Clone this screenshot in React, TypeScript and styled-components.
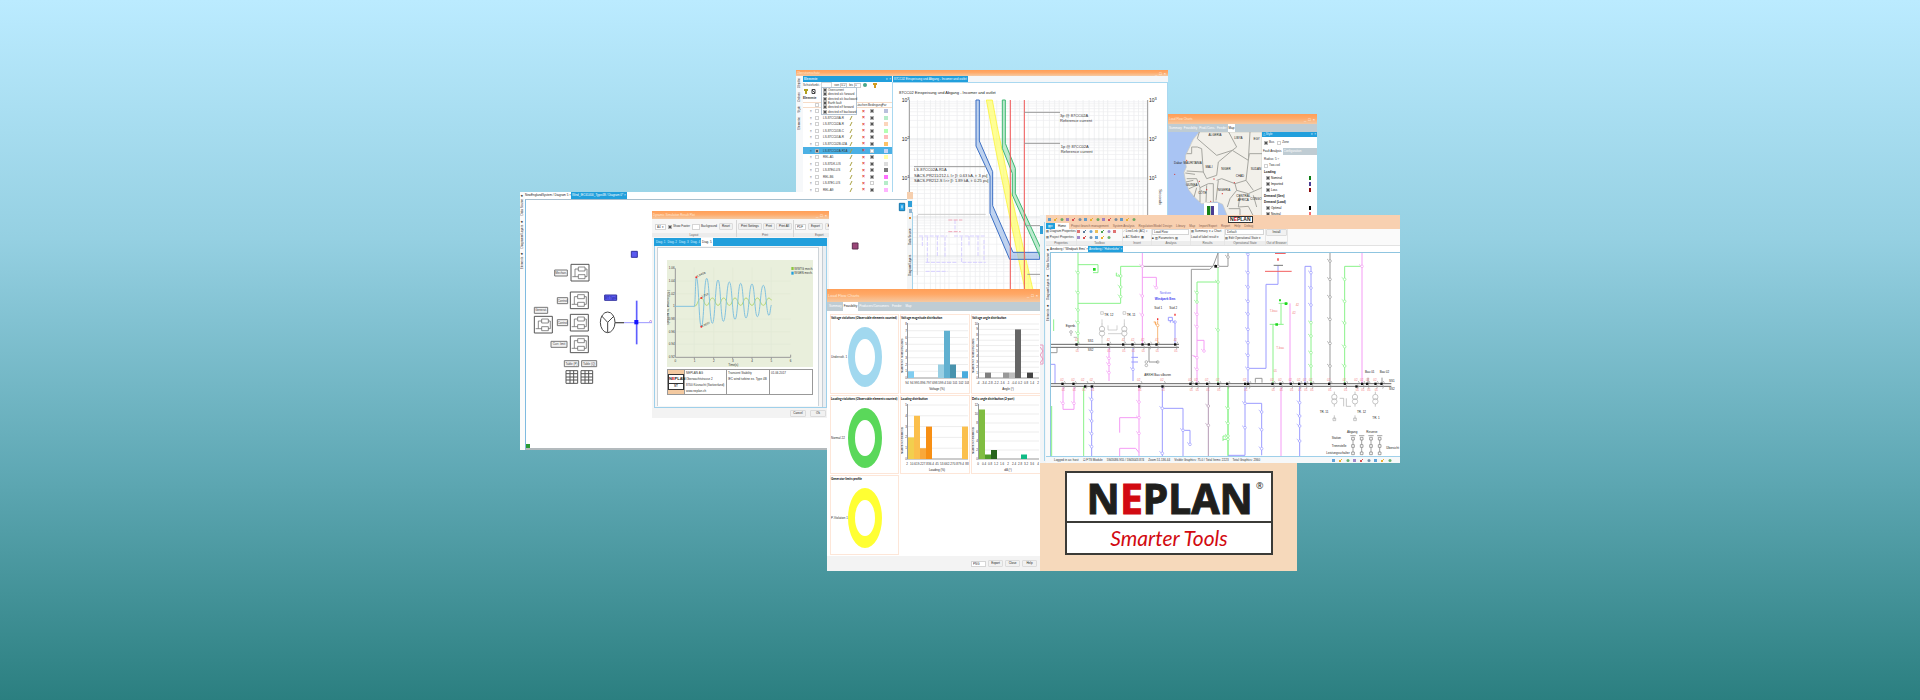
import React from "react";
import styled, { createGlobalStyle, css } from "styled-components";

const GlobalStyle = createGlobalStyle`
  *, *::before, *::after { box-sizing: border-box; }
  body { margin: 0; }
  button, input, select {
    font: inherit;
    color: inherit;
    margin: 0;
    padding: 0;
    border: 0;
    border-radius: 0;
    background: none;
    appearance: none;
  }
  svg { display: block; }
  table { border-collapse: collapse; }
`;

const FONT = `"Liberation Sans", Arial, sans-serif`;
const BLUE = "#219fdc";
const PEACH = "#f6d9bb";

/* ---------- desktop and windows ---------- */

const Page = styled.main`
  min-height: 100vh;
  padding: 70px 0 129px;
  overflow: hidden;
  background: linear-gradient(#bbebff, #95d0e2 34%, #60a9b5 67%, #2b7f80);
  font-family: ${FONT};
  font-size: 3px;
  line-height: 5px;
  color: #333;
`;

const Stage = styled.div`
  position: relative;
  width: 880px;
  height: 501px;
  margin: 0 auto;
`;

const Win = styled.section<{ $x: number; $y: number; $w: number; $h: number; $bg?: string }>`
  position: absolute;
  left: ${(p) => p.$x}px;
  top: ${(p) => p.$y}px;
  width: ${(p) => p.$w}px;
  height: ${(p) => p.$h}px;
  display: flex;
  flex-direction: column;
  overflow: hidden;
  white-space: nowrap;
  background: ${(p) => p.$bg ?? "#fff"};
`;

const TitleBar = styled.header<{ $h: number; $size?: number }>`
  flex: none;
  display: flex;
  align-items: center;
  justify-content: space-between;
  height: ${(p) => p.$h}px;
  padding: 0 2px 0 1px;
  background: linear-gradient(#ff9f58, #ffa866 40%, #f5c9a2);
  color: #ffe9d6;
  font-size: ${(p) => p.$size ?? 3}px;
`;

const WinButtons = styled.span`
  display: flex;
  gap: 2px;
  color: #fff;
  font-size: 4px;
`;

const Row = styled.div<{ $gap?: number; $pad?: string }>`
  display: flex;
  align-items: center;
  gap: ${(p) => p.$gap ?? 0}px;
  padding: ${(p) => p.$pad ?? "0"};
`;

const Body = styled.div`
  flex: 1;
  display: flex;
  min-height: 0;
`;

const Column = styled.div<{ $w?: number; $bg?: string }>`
  flex: ${(p) => (p.$w ? `0 0 ${p.$w}px` : "1")};
  min-width: 0;
  display: flex;
  flex-direction: column;
  background: ${(p) => p.$bg ?? "transparent"};
`;

const Tabs = styled.nav<{ $h: number; $bg?: string; $color?: string; $pad?: number }>`
  flex: none;
  display: flex;
  align-items: stretch;
  height: ${(p) => p.$h}px;
  padding: 0 ${(p) => p.$pad ?? 0}px;
  background: ${(p) => p.$bg ?? "#fff"};
  color: ${(p) => p.$color ?? "#222"};
`;

const Tab = styled.button<{ $active?: boolean; $blue?: boolean; $pad?: number }>`
  padding: 0 ${(p) => p.$pad ?? 2}px;
  line-height: 5px;
  ${(p) => p.$active && css`background: #fff; color: #222;`}
  ${(p) => p.$blue && css`background: ${BLUE}; color: #fff;`}
`;

const SideRail = styled.div<{ $w: number; $bg?: string }>`
  flex: 0 0 ${(p) => p.$w}px;
  display: flex;
  flex-direction: column;
  gap: 4px;
  padding-top: 2px;
  background: ${(p) => p.$bg ?? "#fafafa"};
  span {
    writing-mode: vertical-rl;
    transform: rotate(180deg);
    line-height: ${(p) => p.$w}px;
  }
`;

const Check = styled.input.attrs({ type: "checkbox" })`
  flex: none;
  display: block;
  width: 4px;
  height: 4px;
  border: 1px solid #d0d0d0;
  background: #fff;
  &:checked { background: #555; border-color: #b4b4b4; }
`;

const Label = styled.label`
  display: flex;
  align-items: center;
  gap: 1px;
`;

const Pick = styled.select<{ $w: number }>`
  width: ${(p) => p.$w}px;
  height: 6px;
  padding-left: 1px;
  border: 1px solid #d5d5d5;
  background: #fff;
  line-height: 4px;
`;

const Field = styled.input<{ $w: number }>`
  width: ${(p) => p.$w}px;
  height: 5px;
  border: 1px solid #ccc;
`;

const Push = styled.button<{ $w?: number }>`
  min-width: ${(p) => p.$w ?? 0}px;
  height: 7px;
  padding: 0 2px;
  border: 1px solid #dcdcdc;
  border-radius: 1px;
  background: #f1f1f1;
  line-height: 5px;
  color: #222;
`;

const Drawing = styled.svg`
  flex: none;
  font-family: ${FONT};
`;

const Controls = () => (
  <WinButtons aria-hidden="true"><span>_</span><span>□</span><span>×</span></WinButtons>
);

/* ---------- overcurrent protection window ---------- */

const ElementsTable = styled.table`
  width: 100%;
  height: 91px;
  table-layout: fixed;
  text-align: left;
  line-height: 4px;
  td, th { padding: 0; font-weight: normal; }
  th { border-bottom: 1px solid #f6dcc8; border-top: 1px solid #f6dcc8; }
  td:first-child { padding-left: 7px; }
  td:nth-child(5) { padding-left: 6px; }
  td:nth-child(6), td:nth-child(7) { padding-left: 2px; }
`;

const ElementRow = styled.tr<{ $selected?: boolean }>`
  background: ${(p) => (p.$selected ? "#4bb0e4" : "#fff")};
`;

const Swatch = styled.i<{ $c: string; $w?: number }>`
  display: block;
  flex: none;
  width: ${(p) => p.$w ?? 4}px;
  height: 4px;
  background: ${(p) => p.$c};
`;

const Cross = styled.b`
  color: #e03030;
  font-size: 5px;
`;

const BlueHeader = styled.div<{ $h: number }>`
  flex: none;
  display: flex;
  justify-content: space-between;
  align-items: center;
  height: ${(p) => p.$h}px;
  padding: 0 1px;
  background: ${BLUE};
  color: #e4f5ff;
`;

const Menu = styled.div`
  position: absolute;
  left: 25px;
  top: 17px;
  width: 36px;
  height: 28px;
  display: flex;
  flex-direction: column;
  justify-content: space-around;
  padding: 0 1px;
  border: 1px solid #b5c4d2;
  background: #fff;
  line-height: 4px;
`;

const elements: [string, string, boolean][] = [
  ["", "#b9c0dc", true],
  ["LS-87CC03A-R", "#b5ecc8", true],
  ["LS-87CC02A-R", "#fbd5bb", true],
  ["LS-87CC01B-C", "#b4ffb4", true],
  ["LS-87CC01A-R", "#ffbcbc", true],
  ["LS-87CC02B-02A", "#ffc266", true],
  ["LS-87CC02A-R1A", "#c7d4f5", false],
  ["REL-A5", "#ffffa8", true],
  ["LS-87DK-LIS", "#dddddd", true],
  ["LS-87E4-LIS", "#7b7b7b", true],
  ["REL-B6", "#ff70ff", true],
  ["LS-87E1-LIS", "#b5ecc8", false],
  ["REL-A9", "#ffb4ff", true],
];

const menuItems = ["Overcurrent", "directed o/c forward", "directed o/c backward", "Earth fault", "directed e/f forward", "directed e/f backward"];

const gridX: number[] = [];
for (let d = 391; d < 1106; d += 119) [1, 1.6, 2.4, 3.4, 4.6, 6, 7.8].forEach((v) => gridX.push(d + 119 * Math.log10(v)));
const gridY: number[] = [];
for (let d = 0; d < 5; d++) for (let v = 1; v < 10; v++) gridY.push(120 + 117 * (d + 1 - Math.log10(v)));

const ProtectionPlot = () => (
  <Drawing width={273} height={211} viewBox="342 69 819 633" role="img" aria-label="Time-current characteristics">
    <g stroke="#e9eaec" strokeWidth={2}>
      {gridX.filter((x) => x < 1106).map((x, i) => <path key={i} d={`M${x} 120V700`} />)}
      {gridY.map((y, i) => <path key={i} d={`M391 ${y}H1106`} stroke={i % 9 === 0 ? "#d2d4d8" : "#ededf0"} />)}
    </g>
    <path d="M391 120V700M1106 120V700" stroke="#999" strokeWidth={3} />
    <g fontSize={12} fill="#222">
      <text x={360} y={103}>87CC02 Einspeisung und Abgang - Incomer and outlet</text>
      {[["3", 125], ["2", 242], ["1", 359]].map(([e, y]) => (
        <g key={e} fontSize={15}>
          <text x={368} y={y}>10<tspan dy={-5} fontSize={12}>{e}</tspan></text>
          <text x={1110} y={y}>10<tspan dy={-5} fontSize={12}>{e}</tspan></text>
        </g>
      ))}
    </g>
    <path d="M417 463H620M415 465V645" stroke="#ccc" strokeWidth={3} fill="none" />
    <g stroke="#d6cfff" strokeWidth={3} strokeDasharray="12 4" fill="none">
      <path d="M420 528H505M525 528H620M440 607H535M550 607H620M440 634H505M430 530V560M445 530V607M475 528V590M498 530V590M548 530V607M570 528V560M597 528V590M615 540V600M528 480V515" />
      <path d="M508 480H550M508 515H545" stroke="#f0a8b8" />
    </g>
    <path d="M622 120L650 270 738 690H762L700 420 655 200 640 120Z" fill="#ffff5c" fillOpacity={0.65} stroke="#fbf21f" strokeWidth={2} />
    <path d="M591 120V258L633 348V460L692 598H782V577H702L641 437V335L601 243V120Z" fill="#9dbbe8" fillOpacity={0.65} stroke="#3c6fc4" strokeWidth={3} />
    <path d="M670 120V265L700 340V405L788 600V570L709 400V325L679 250V120Z" fill="#9be0b5" fillOpacity={0.65} stroke="#3fb873" strokeWidth={3} />
    <path d="M694 120V700M736 120V700" stroke="#f05a5a" strokeWidth={3} />
    <path d="M736 157H843M736 250H843M405 320H620M736 497H800M745 643H800" stroke="#999" strokeWidth={3} fill="none" />
    <g fontSize={12} fill="#333">
      <text x={843} y={171}>3p @ 87CC02A</text>
      <text x={843} y={187}>Reference current</text>
      <text x={845} y={264}>1p @ 87CC02A</text>
      <text x={845} y={280}>Reference current</text>
      <text x={405} y={334}>LS-87CC02A-R1A</text>
      <text x={405} y={350}>SACS-PR211/212-L I&gt; [I: 0.63 kA, t: 3 pu]</text>
      <text x={405} y={366}>SACS-PR212-S I&gt;&gt; [I: 1.89 kA, t: 0.25 pu]</text>
      <text transform="translate(1141 388) rotate(90)">Seconds</text>
    </g>
  </Drawing>
);

const PlotFrame = styled.div`
  flex: 1;
  border: 1px solid #a9d8f0;
  overflow: hidden;
`;

const OvercurrentWindow = () => (
  <Win $x={276} $y={0} $w={372} $h={222}>
    <TitleBar $h={6}><span>Überstromschutz</span><Controls /></TitleBar>
    <Body>
      <SideRail $w={7} $bg="#f6f8fa"><span>Objekte</span><span>Ordnen</span><span>Style</span><span>Elemente</span></SideRail>
      <Column $w={89}>
        <BlueHeader $h={6}><b>Elemente</b><span>▾ ×</span></BlueHeader>
        <Row $gap={2}>
          <Label>Schutzfunkt.:<Pick $w={11} aria-label="Schutzfunktionen" /></Label>
          <Label>von<Field $w={7} defaultValue="0.2" /></Label>
          <Label>bis<Field $w={7} defaultValue="5" /></Label>
          <svg width={14} height={5} viewBox="0 0 14 5"><circle cx={2} cy={2} r={2} fill="#4aa58a" /><path d="M10 1h4M12 1v4" stroke="#d39b20" strokeWidth={2} /></svg>
        </Row>
        <Row $pad="1px 0 0 1px">
          <svg width={12} height={5} viewBox="0 0 12 5"><path d="M0 1h4M2 1v4" stroke="#b0a020" strokeWidth={2} /><path d="M8 0.500h3v4h-3zM8 1l3 3" stroke="#444" fill="none" /></svg>
        </Row>
        <Row $pad="2px 0 1px"><b>Elemente</b></Row>
        <ElementsTable>
          <colgroup><col style={{ width: 12 }} /><col style={{ width: 8 }} /><col style={{ width: 25 }} /><col style={{ width: 8 }} /><col style={{ width: 12 }} /><col style={{ width: 14 }} /><col /></colgroup>
          <thead><tr><th /><th><Check aria-label="Alle" /></th><th /><th /><th>Löschen</th><th>Bedingung</th><th>Far</th></tr></thead>
          <tbody>
            {elements.map(([name, c, on], i) => (
              <ElementRow key={i} $selected={i === 6}>
                <td>▯</td>
                <td><Check aria-label="Auswahl" defaultChecked={i === 6} /></td>
                <td>{name}</td>
                <td>
                  <svg width={6} height={4} viewBox="0 0 6 4"><path d="M2 4L4 0" stroke="#a8a040" /></svg>
                </td>
                <td><Cross>×</Cross></td>
                <td><Check aria-label="Bedingung" defaultChecked={on} /></td>
                <td><Swatch $c={c} /></td>
              </ElementRow>
            ))}
          </tbody>
        </ElementsTable>
        <Menu>{menuItems.map((m) => <Label key={m}><Check defaultChecked />{m}</Label>)}</Menu>
      </Column>
      <Column>
        <Tabs $h={6} $pad={1} $bg="#f4f6f8"><Tab $blue $pad={1}>87CC02 Einspeisung und Abgang - Incomer and outlet</Tab></Tabs>
        <PlotFrame><ProtectionPlot /></PlotFrame>
      </Column>
    </Body>
  </Win>
);

/* ---------- map window ---------- */

const countries: [string, number, number][] = [
  ["ALGERIA", 525, 107], ["LIBYA", 595, 116], ["EGY", 650, 120], ["MAURITANIA", 458, 192], ["MALI", 507, 203],
  ["NIGER", 558, 208], ["CHAD", 600, 231], ["SUDAN", 648, 210], ["NIGERIA", 552, 271], ["GUINEA", 455, 258],
  ["CÔTE", 487, 280], ["CENTRAL", 610, 290], ["AFRICA", 610, 302], ["CONGO", 648, 300], ["Dakar", 414, 192],
];

const AfricaMap = () => (
  <Drawing width={94} height={84} viewBox="384 95 282 252" role="img" aria-label="Map of West Africa">
    <path d="M384 95H666V347H384Z" fill="#a9c4f3" />
    <path d="M478 95Q455 118 450 138L437 165Q434 185 439 200L432 216 436 240 447 270 465 292 485 310 530 304 548 312 562 347H666V95Z" fill="#f2f0ea" stroke="#c9c9c0" strokeWidth={2} />
    <g fill="none" stroke="#a6a6a0" strokeWidth={3} strokeLinejoin="round">
      <path d="M478 95L472 115 530 165 577 150 590 140 566 95M440 160H455V140H472L485 145 490 215 440 212M490 215L500 235 530 225 535 185 577 150 625 180 630 95M666 160H628L625 180 618 240 585 250 545 235 530 240M440 235H470L480 262 505 250 520 250 520 305M470 262L462 290M480 262V305M500 255L498 305M535 240L528 300M585 250L590 270 570 295 562 320M590 270L625 280 666 262M618 240L640 270M600 285L595 320 625 318 640 347M566 325H600V347M640 285L650 320" />
      <path d="M436 218L465 222M438 245L460 240M447 265L470 255" />
    </g>
    <g fontSize={9} fill="#222" textAnchor="middle">
      {countries.map(([n, x, y]) => <text key={n} x={x} y={y}>{n}</text>)}
    </g>
    <g fill="#d84040">
      {[[404, 222], [478, 243], [522, 236], [547, 280], [512, 303], [583, 247], [500, 268], [440, 180]].map(([x, y]) => <circle key={x} cx={x} cy={y} r={2} />)}
    </g>
    <path d="M492 308H534V347H492Z" fill="#fff" />
    <path d="M501 317H511V347H501Z" fill="#178217" />
    <path d="M513 317H522V347H513Z" fill="#4a3c93" />
  </Drawing>
);

const StyleItem = styled.div<{ $indent?: boolean }>`
  display: flex;
  align-items: center;
  justify-content: space-between;
  height: 6px;
  padding: 0 6px 0 ${(p) => (p.$indent ? 4 : 2)}px;
  color: #111;
`;

const styles: [string, string?][] = [["Loading"], ["Nominal", "#0d7d15"], ["Imported", "#4a3c93"], ["Loss", "#8e0d0d"], ["Demand (Gen)"], ["Demand (Load)"], ["Optimal", "#000"], ["Neutral", "#f26d6d"]];

const MapWindow = () => (
  <Win $x={648} $y={44} $w={149} $h={106}>
    <TitleBar $h={10}><span>Load Flow Charts</span><Controls /></TitleBar>
    <Tabs $h={8} $bg="#bfccd3" $color="#fff">
      <Tab $pad={1}>Summary</Tab><Tab $pad={1}>Feasibility</Tab><Tab $pad={1}>Prod./Cons.</Tab><Tab $pad={1}>Feeder</Tab><Tab $active $pad={1}>Map</Tab>
    </Tabs>
    <Body>
      <AfricaMap />
      <Column>
        <BlueHeader $h={5}><span>△ Style</span><span>▾ ×</span></BlueHeader>
        <Row $gap={3} $pad="3px 2px"><Label><Check defaultChecked />Bus</Label><Label><Check />Zone</Label></Row>
        <Tabs $h={7} $bg="#bfccd3" $color="#fff"><Tab $active $pad={1}>Fault Analysis</Tab><Tab $pad={1}>Configuration</Tab></Tabs>
        <Row $gap={1} $pad="2px 2px 0">Radius: 5 ÷</Row>
        <Row $pad="1px 2px"><Label><Check />Two-coil</Label></Row>
        {styles.map(([n, c]) => (
          <StyleItem key={n} $indent={!!c}>
            <span>{c ? <Label><Check defaultChecked />{n}</Label> : <b>{n}</b>}</span>
            {c && <Swatch $c={c} $w={2} />}
          </StyleItem>
        ))}
      </Column>
    </Body>
  </Win>
);

/* ---------- single line diagram window (wind turbine) ---------- */

const Block = ({ x, y }: { x: number; y: number }) => (
  <g transform={`translate(${x} ${y})`} fill="none" stroke="#555" strokeWidth={3}>
    <path d="M0 0H54V50H0Z" />
    <path d="M22 8H42V20H22ZM22 31H42V43H22ZM22 14H12V37H22M42 14H48V37H42M4 37H12" strokeWidth={2} />
  </g>
);

const Tag = ({ x, y, w, children }: { x: number; y: number; w: number; children: string }) => (
  <g>
    <path d={`M${x} ${y}h${w}v18h-${w}z`} fill="#f2f2f2" stroke="#777" strokeWidth={3} />
    <text x={x + w / 2} y={y + 12} fontSize={9} fill="#444" textAnchor="middle">{children}</text>
  </g>
);

const MatrixIcon = ({ x }: { x: number }) => (
  <path d={`M${x} 574h35v38h-35zM${x + 12} 574v38M${x + 23} 574v38M${x} 583h35M${x} 593h35M${x} 602h35`} fill="none" stroke="#555" strokeWidth={3} />
);

const TurbineDiagram = () => (
  <Drawing width={381} height={248} viewBox="48 62 1143 744" role="img" aria-label="Wind turbine single line diagram">
    <Block x={183} y={255} /><Block x={181} y={338} /><Block x={181} y={405} /><Block x={181} y={470} /><Block x={73} y={411} />
    <Tag x={134} y={272} w={38}>Mechan.</Tag>
    <Tag x={142} y={355} w={31}>Control</Tag>
    <Tag x={142} y={421} w={31}>Control</Tag>
    <Tag x={123} y={486} w={48}>Curr. limit</Tag>
    <Tag x={73} y={384} w={40}>Generat.</Tag>
    <Tag x={163} y={544} w={43}>Table (P)</Tag>
    <Tag x={215} y={544} w={45}>Table (Q)</Tag>
    <MatrixIcon x={168} /><MatrixIcon x={213} />
    <path d="M364 216h18v18h-18zM284 347h36v16h-36z" fill="#5a5af0" stroke="#3434a0" strokeWidth={3} />
    <text x={302} y={358} fontSize={9} fill="#1e1e90" textAnchor="middle">WT Typ4</text>
    <ellipse cx={293} cy={429} rx={22} ry={31} fill="none" stroke="#444" strokeWidth={3} />
    <path d="M293 429L275 410M293 429L312 410M293 429V459" stroke="#444" strokeWidth={3} />
    <path d="M315 430H342" stroke="#555" strokeWidth={4} />
    <path d="M342 430H430" stroke="#9a96ff" strokeWidth={3} />
    <path d="M380 364V495" stroke="#5f5fff" strokeWidth={5} />
    <path d="M373 422h12v13h-12z" fill="#1414ff" />
    <path d="M418 428l4-6 4 6" stroke="#b070d0" strokeWidth={2} fill="none" />
    <path d="M1027 191h17v18h-17z" fill="#9a4578" stroke="#5d3050" strokeWidth={3} />
    <path d="M1168 72h16v22h-16z" fill="#28a4e8" stroke="#1473a8" strokeWidth={3} />
    <path d="M1176 78v9" stroke="#fff" strokeWidth={3} />
  </Drawing>
);

const DiagramFrame = styled.div`
  position: relative;
  flex: 1;
  border-top: 1px solid #a8bfcd;
  border-left: 1px solid #7fbbe0;
  border-bottom: 2px solid #b3babd;
  border-right: 1px solid #a9cfe6;
  overflow: hidden;
`;

const GreenCorner = styled.i`
  position: absolute;
  left: 0;
  bottom: 0;
  width: 4px;
  height: 4px;
  background: #2a9a35;
`;

const TurbineWindow = () => (
  <Win $x={0} $y={122} $w={388} $h={258}>
    <Body>
      <SideRail $w={5} $bg="#fbfbfb"><span>Data Source ◆</span><span>Diagramm/Layers ◆</span><span>Elements ◆</span></SideRail>
      <Column>
        <Tabs $h={7}><Tab $pad={0}>NewEnglandSystem / Diagram 5 ×</Tab><Tab $blue $pad={1}>Wind_IEC61400_Type4B / Diagram 0* ×</Tab></Tabs>
        <DiagramFrame><TurbineDiagram /><GreenCorner /></DiagramFrame>
      </Column>
    </Body>
  </Win>
);

const StripWindow = () => (
  <Win $x={387} $y={122} $w={6} $h={98} $bg="#f3f5f6">
    <Drawing width={6} height={98} viewBox="0 0 6 98" aria-hidden="true">
      <path d="M0 0H6V7H0Z" fill="#f6cfae" />
      <path d="M1 9h4v6H1z" fill="#2f9fd8" />
      <path d="M2 17h3v4H2z" fill="#8fb4d0" />
      <path d="M2 25h2v2H2z" fill="#d8913c" />
      <path d="M5.500 20V98" stroke="#a7d4ea" />
      <text transform="translate(4 53) rotate(-90)" fontSize={3} fill="#222">Data Source</text>
      <text transform="translate(4 84) rotate(-90)" fontSize={3} fill="#222">Diagram/Layers</text>
    </Drawing>
  </Win>
);

/* ---------- dynamic simulation window ---------- */

const ToolGroup = styled.div<{ $w: number }>`
  flex: 0 0 ${(p) => p.$w}px;
  display: flex;
  flex-direction: column;
  justify-content: space-between;
  border-right: 1px solid #d5d5d5;
  small {
    background: #ececec;
    font-size: 3px;
    line-height: 4px;
    text-align: center;
    color: #666;
  }
`;

const wave = (pts: number[][]) =>
  pts.map(([x, y], i) => {
    if (!i) return `M${x} ${y}`;
    const [px, py] = pts[i - 1];
    const m = (px + x) / 2;
    return `C${m} ${py} ${m} ${y} ${x} ${y}`;
  }).join("");

const rotor = [[163, 317], [169, 230], [184, 378], [200, 233], [217, 368], [234, 238], [250, 362], [268, 244], [285, 356], [302, 248], [318, 352], [336, 250], [352, 348], [370, 254], [387, 344], [395, 313]];
const turbine = [[163, 317], [184, 292], [200, 314], [217, 292], [234, 314], [251, 292], [268, 314], [285, 292], [302, 314], [318, 292], [336, 314], [352, 292], [370, 314], [387, 292], [395, 298]];

const SimulationPlot = () => (
  <Drawing width={146} height={107} viewBox="81 178 438 321" role="img" aria-label="Generator speed over time">
    <path d="M81 178H519V499H81Z" fill="#e9efdc" />
    <path d="M163 200V470M221 200V470M278 200V470M336 200V470M394 200V470M106 241H452M106 279H452M106 355H452M106 393H452M106 431H452" stroke="#e3ead6" strokeWidth={2} />
    <path d="M106 203V470H452V462M163 470v5M221 470v5M278 470v5M336 470v5M394 470v5" fill="none" stroke="#999" strokeWidth={3} />
    <path d={wave(turbine)} fill="none" stroke="#b4d873" strokeWidth={3} />
    <path d={`M106 317H163${wave(rotor).replace("M163 317", "")}`} fill="none" stroke="#82c2df" strokeWidth={3} />
    <g fontSize={9} fill="#333">
      {["1.06", "1.04", "1.02", "1", "0.98", "0.96", "0.94", "0.92"].map((t, i) => <text key={t} x={104} y={206 + i * 38} textAnchor="end">{t}</text>)}
      {[0, 1, 2, 3, 4, 5, 6].map((n) => <text key={n} x={106 + n * 57.600} y={484} textAnchor="middle">{n}</text>)}
      <text x={280} y={496} textAnchor="middle">Time(s)</text>
      <text transform="translate(88 372) rotate(-90)">speed WTG, WGEN [p.u.]</text>
      <text x={463} y={207}>WWTG mech.</text>
      <text x={463} y={221}>WGEN mech.</text>
      <text transform="translate(172 230) rotate(-25)">1.0468</text>
      <text transform="translate(186 291) rotate(-25)">1.012</text>
      <text transform="translate(186 380) rotate(-25)">0.9697</text>
    </g>
    <path d="M454 199h7v9h-7z" fill="#8cc63f" /><path d="M454 213h7v9h-7z" fill={BLUE} />
    <g fill="#f03030"><circle cx={169} cy={230} r={3} /><circle cx={184} cy={292} r={3} /><circle cx={184} cy={378} r={3} /></g>
  </Drawing>
);

const SimFrame = styled.div`
  flex: 1;
  display: flex;
  margin: 0 2px;
  border: 1px solid #9fd0ea;
  border-top: 0;
`;

const Sheet = styled.div`
  flex: 1;
  margin: 1px 3px 1px 2px;
  padding: 12px 5px 0 9px;
  border: 1px solid #cdd3d8;
  border-bottom: 0;
  background: #fff;
`;

const ScrollTrack = styled.div`
  width: 4px;
  background: #e9eef2;
  border-left: 1px solid #c3ccd4;
`;

const InfoTable = styled.table`
  width: 146px;
  height: 26px;
  margin-top: 2px;
  table-layout: fixed;
  line-height: 6px;
  td { border: 1px solid #999; padding: 0 1px; vertical-align: top; }
  td:first-child { padding: 4px 0; background: #f3c9a0; }
`;

const MiniLogo = styled.div`
  border: 1px solid #333;
  background: #fff;
  text-align: center;
  font: bold 4px/8px "Liberation Sans", sans-serif;
  color: #222;
  em { color: #d20a11; font-style: normal; }
  span { display: block; border-top: 1px solid #333; font-size: 3px; line-height: 5px; color: #444; }
`;

const DialogFooter = styled.footer<{ $h: number; $gap?: number }>`
  flex: none;
  display: flex;
  align-items: center;
  justify-content: flex-end;
  gap: ${(p) => p.$gap ?? 4}px;
  height: ${(p) => p.$h}px;
  padding: 0 3px;
  background: #f3f3f3;
`;

const SimulationWindow = () => (
  <Win $x={132} $y={141} $w={177} $h={207} $bg="#f6f6f6">
    <TitleBar $h={8}><span>Dynamic Simulation Result Plot</span><Controls /></TitleBar>
    <Body>
      <Column>
        <Row $pad="1px 0">
          <ToolGroup $w={79}>
            <Row $gap={2} $pad="3px 3px">
              <Pick $w={11} aria-label="Paper size"><option>A4 ▾</option></Pick>
              <Label><Check defaultChecked />Show Footer</Label>
              <Label><Pick $w={8} aria-label="Background" />Background</Label>
              <Push>Reset</Push>
            </Row>
            <small>Layout</small>
          </ToolGroup>
          <ToolGroup $w={50}>
            <Row $gap={1} $pad="3px 1px"><Push>Print Settings</Push><Push>Print</Push><Push>Print All</Push></Row>
            <small>Print</small>
          </ToolGroup>
          <ToolGroup $w={48}>
            <Row $gap={2} $pad="3px 1px"><Pick $w={11} aria-label="Format"><option>PDF</option></Pick><Push>Export</Push><Push>Export All</Push></Row>
            <small>Export</small>
          </ToolGroup>
        </Row>
        <Row $pad="0 2px">
          <Column>
            <Tabs $h={8} $bg={BLUE} $color="#d8f0ff" $pad={1}>
              {[1, 2, 3, 4, 5].map((n) => <Tab key={n} $pad={1} $active={n === 5}>Diag. {n}</Tab>)}
            </Tabs>
          </Column>
        </Row>
        <SimFrame>
          <Sheet>
            <SimulationPlot />
            <InfoTable>
              <colgroup><col style={{ width: 17 }} /><col style={{ width: 42 }} /><col style={{ width: 43 }} /><col /></colgroup>
              <tbody>
                <tr>
                  <td><MiniLogo>N<em>E</em>PLAN<span>ST</span></MiniLogo></td>
                  <td>NEPLAN AG<br />Oberwachtstrasse 2<br />8700 Küsnacht (Switzerland)<br />www.neplan.ch</td>
                  <td>Transient Stability<br />IEC wind turbine ex. Type 4B</td>
                  <td>01.06.2017</td>
                </tr>
              </tbody>
            </InfoTable>
          </Sheet>
          <ScrollTrack />
        </SimFrame>
      </Column>
    </Body>
    <DialogFooter $h={10}><Push $w={16}>Cancel</Push><Push $w={16}>Ok</Push></DialogFooter>
  </Win>
);

/* ---------- load flow charts window ---------- */

const ChartGrid = styled.div`
  flex: 1;
  display: grid;
  grid-template-columns: repeat(3, 1fr);
  grid-template-rows: repeat(3, 1fr);
  gap: 1px;
  padding: 3px 1px 1px 3px;
`;

const Card = styled.article`
  border: 1px solid #fde6d8;
  h3 {
    margin: 0;
    font: bold 3px/6px Lato, ${FONT};
    color: #000;
  }
`;

const Donut = ({ title, label, color }: { title: string; label: string; color: string }) => (
  <Card>
    <h3>{title}</h3>
    <Drawing width={67} height={71} viewBox="0 0 67 71" role="img" aria-label={title}>
      <path d="M17 36a17 30 0 1 0 34 0a17 30 0 1 0-34 0zM24 36a10 18 0 1 1 20 0a10 18 0 1 1-20 0z" fill={color} fillRule="evenodd" />
      <text x={0} y={37} fontSize={3} fill="#333">{label}</text>
    </Drawing>
  </Card>
);

type Bar = [number, number, string];
const BarChart = (p: { title: string; max: number; step: number; bars: Bar[]; labels: string[]; unit: string; y: string }) => {
  const h = (v: number) => (v * 54) / p.max;
  const ticks = Array.from({ length: p.max / p.step + 1 }, (_, i) => i * p.step);
  return (
    <Card>
      <h3>{p.title}</h3>
      <Drawing width={68} height={71} viewBox="0 0 68 71" role="img" aria-label={p.title}>
        {ticks.map((t) => (
          <g key={t}>
            <path d={`M6 ${57 - h(t)}H67`} stroke={t ? "#ededed" : "#999"} />
            <text x={6} y={58 - h(t)} fontSize={3} fill="#333" textAnchor="end">{t}</text>
          </g>
        ))}
        {p.bars.map(([slot, v, c]) => <path key={slot} d={`M${7 + slot * 6} ${57 - h(v)}h6V57h-6z`} fill={c} />)}
        <path d="M6.500 2V57" stroke="#999" />
        {p.labels.map((l, i) => <text key={l} x={6 + i * 6} y={63} fontSize={3} fill="#333" textAnchor="middle">{l}</text>)}
        <text x={36} y={69} fontSize={3} fill="#222" textAnchor="middle">{p.unit}</text>
        <text transform="translate(2 52) rotate(-90)" fontSize={3} fill="#222">{p.y}</text>
      </Drawing>
    </Card>
  );
};

const ChartsWindow = () => (
  <Win $x={307} $y={219} $w={213} $h={282}>
    <TitleBar $h={13} $size={4}><span>Load Flow Charts</span><Controls /></TitleBar>
    <Tabs $h={9} $bg="#bfccd3" $color="#fff" $pad={1}>
      <Tab $pad={1}>Summary</Tab><Tab $active $pad={1}>Feasibility</Tab><Tab $pad={1}>Producers/Consumers</Tab><Tab>Feeder</Tab><Tab>Map</Tab>
    </Tabs>
    <ChartGrid>
      <Donut title="Voltage violations (Observable elements counted)" label="Undervolt. 1" color="#a1d8ef" />
      <BarChart title="Voltage magnitude distribution" max={8} step={1} unit="Voltage (%)" y="Number of nodes/busbars"
        bars={[[0, 1, "#80cdf0"], [5, 2, "#98cfe3"], [6, 7, "#60b0d0"], [7, 2, "#4893ad"], [9, 1, "#49abdc"]]}
        labels={["94", "94.9", "95.8", "96.7", "97.6", "98.5", "99.4", "100", "101", "102", "103"]} />
      <BarChart title="Voltage angle distribution" max={10} step={1} unit="Angle (°)" y="Number of nodes/busbars"
        bars={[[1, 1, "#808080"], [4, 1, "#999"], [5, 1, "#bdbdbd"], [6, 9, "#666"], [8, 1, "#444"]]}
        labels={["-4", "-3.4", "-2.8", "-2.2", "-1.6", "-1", "-0.4", "0.2", "0.8", "1.4", "2"]} />
      <Donut title="Loading violations (Observable elements counted)" label="Normal 22" color="#5ad85a" />
      <BarChart title="Loading distribution" max={5} step={1} unit="Loading (%)" y="Number of elements"
        bars={[[0, 2, "#f2cf4e"], [1, 4, "#fbbf4c"], [2, 1, "#f9a83a"], [3, 3, "#f78f14"], [9, 3, "#fbc04d"]]}
        labels={["2", "10.6", "19.2", "27.8", "36.4", "45", "53.6", "62.2", "70.8", "79.4", "88"]} />
      <BarChart title="Delta angle distribution (2-port)" max={12} step={2} unit="dΔ (°)" y="Number of elements"
        bars={[[0, 11, "#80bd41"], [1, 1, "#4f9a2a"], [2, 2, "#27641c"], [7, 1, "#10bb86"]]}
        labels={["0", "0.4", "0.8", "1.2", "1.6", "2", "2.4", "2.8", "3.2", "3.6", "4"]} />
      <Donut title="Generator limits profile" label="P-Violation 1" color="#ffff33" />
    </ChartGrid>
    <DialogFooter $h={15} $gap={2}>
      <Pick $w={15} aria-label="Format"><option>PNG</option></Pick>
      <Push $w={15}>Export</Push><Push $w={15}>Close</Push><Push $w={15}>Help</Push>
    </DialogFooter>
  </Win>
);

/* ---------- logo card ---------- */

const LogoCard = styled.div`
  margin: 11px 0 0 25px;
  width: 208px;
  height: 84px;
  display: flex;
  flex-direction: column;
  border: 2px solid #3b3b37;
  background: #fff;
`;

const Wordmark = styled.div`
  display: flex;
  justify-content: center;
  height: 50px;
  padding-left: 12px;
  border-bottom: 2px solid #3b3b37;
  font: bold 41px/50px "Noto Sans", "Open Sans", sans-serif;
  color: #1f1f1d;
  span { -webkit-text-stroke: 1px; }
  em { font-style: normal; color: #d20a11; }
  sup { margin: 5px 0 0 3px; font: 9px/16px "Open Sans", sans-serif; }
`;

const Tagline = styled.div`
  flex: 1;
  font: italic 21px/29px Lato, "Open Sans", sans-serif;
  text-align: center;
  color: #d20a11;
`;

const LogoWindow = () => (
  <Win $x={520} $y={390} $w={257} $h={111} $bg={PEACH}>
    <LogoCard>
      <Wordmark><span>N<em>E</em>PLAN</span><sup>®</sup></Wordmark>
      <Tagline>Smarter Tools</Tagline>
    </LogoCard>
  </Win>
);

/* ---------- network window ---------- */

const G = "#8af28a", P = "#f59cf5", B = "#9c9cff", K = "#999";

const feeders: [string, string][] = [
  [G, "M145 141V415M145 176H205V200H190M145 292H273V181H338M273 210H260V200M565 181V533M565 228H502V290M162 541V750M595 541V750M66 600V750M72 340V375M595 690H580V705"],
  [P, "M338 141V415M338 214H380V245M502 290V533M502 403H523V435M238 424V525M100 541V610H133V541M328 541V750M328 635H270V680M270 750V727H318L328 740M502 455L488 448"],
  [B, "M436 345V415M310 424V525M63 475H76V533M186 541V750M398 541V750M398 607H460V750M460 673H481V715"],
  [K, "M340 181H550L565 141M565 141V181H595V141M485 533V190H540L550 181M358 424V468H385M82 424V440H63"],
  ["#b59ab5", "M536 541V750"],
  ["#f7b97c", "M384 345V415"],
];
const feedersRight: [string, string][] = [
  [B, "M115 141V533M115 487H169V235H205V178M286 533V181H304V350M106 541V748H55M106 592H156V748M270 541V750"],
  [G, "M304 350V533M190 355V533M214 292V355M180 355H222M207 292H235M405 533V181H457M55 541V748M55 700H40"],
  [P, "M241 292V533M457 141V533M214 541V750"],
  [K, "M361 141V533M137 530V517H157V530M475 515V533M517 515V533"],
  ["#f26060", "M166 196H246"],
  ["#777", "M192 178H220"],
];

const devices: [string, number, number[]][] = [
  [G, 145, [200, 260, 312, 350, 382]], [G, 273, [210, 243, 272]], [P, 338, [181, 270, 327]], [P, 502, [325, 362, 455, 490]],
  [G, 565, [228, 372]], [G, 502, [260, 288]], [P, 238, [457, 475, 500]], [B, 310, [490]], [P, 100, [592]], [P, 133, [592]],
  [B, 186, [580, 617, 645, 683, 722]], [P, 328, [588, 635, 682]], [B, 398, [607, 742]], [B, 460, [673]], [B, 481, [715]],
  ["#b59ab5", 536, [600, 658]], [P, 523, [435]], [P, 380, [245]], ["#f7a04c", 384, [358]], [B, 436, [348]], [K, 565, [181]], [G, 595, [690]],
  [B, 655, [145, 200, 243, 286, 324, 370, 410, 448, 488]], [B, 844, [200, 246, 297]], [G, 844, [350, 390, 440, 480]],
  [K, 901, [165, 220, 273, 340, 412, 480]], [G, 945, [220, 286, 351, 422, 480]], [P, 997, [181]],
  [G, 595, [607, 652, 700]], [B, 646, [592, 665]], [B, 696, [618, 671, 728]], [B, 810, [590, 630, 660, 705]], [K, 595, [153]],
];

const Transformer = ({ x, y }: { x: number; y: number }) => (
  <g fill="none" stroke="#aaa" strokeWidth={2}>
    <circle cx={x} cy={y - 7} r={8} /><circle cx={x} cy={y + 6} r={8} />
    <path d={`M${x} ${y - 15}v-8M${x} ${y + 14}v8`} />
  </g>
);

const breakersTop = [140, 235, 280, 308, 338, 357, 380, 436];
const breakersMain = [98, 131, 166, 186, 328, 398, 482, 500, 532, 565, 592, 646, 655, 728, 752, 783, 808, 826, 844, 898, 945, 980, 997, 1012, 1037, 1055];

const NetworkDiagram = () => (
  <Drawing width={349} height={204} viewBox="64 141 1047 612" role="img" aria-label="Network single line diagram">
    <g fill="none" strokeWidth={3}>
      {feeders.map(([c, d], i) => <path key={i} d={d} stroke={c} />)}
      <g transform="translate(540 0)">{feedersRight.map(([c, d], i) => <path key={i} d={d} stroke={c} />)}</g>
      {devices.map(([c, x, ys], i) => ys.map((y) => (
        <g key={`${i}-${y}`} stroke={c} strokeWidth={2}>
          <circle cx={x} cy={y} r={4} fill="#fff" />
          <path d={`M${x - 4} ${y - 2}l-5 -4`} />
        </g>
      )))}
    </g>
    <path d="M63 415H448M63 424H448M63 533H1085M63 541H1085" stroke="#666" strokeWidth={3} />
    <g fill="#111">
      {breakersTop.map((x) => <rect key={x} x={x - 3} y={412} width={7} height={7} />)}
      {breakersMain.map((x, i) => <rect key={x} x={x - 3} y={(i > 1 && i < 6) || x === 980 ? 538 : 530} width={7} height={7} />)}
      <rect x={554} y={177} width={8} height={8} />
    </g>
    <g fill="none" stroke="#999" strokeWidth={2}>
      {[...breakersTop.map((x) => [x, 415]), ...breakersMain.map((x) => [x, 533])].map(([x, y], i) => <path key={i} d={`M${x + 4} ${y + 3}q5 5 0 12M${x + 6} ${y - 8}l3 6`} />)}
    </g>
    <g fontSize={9} fill="#f08080">
      {breakersTop.filter((x) => x !== 357).map((x) => <g key={x}><text x={x - 4} y={405}>42</text><text x={x - 2} y={438}>01</text></g>)}
      {[98, 131, 160, 186, 328, 398, 482, 500, 532, 565, 646, 728, 752, 783, 808, 826, 844, 898, 945, 980, 997, 1015, 1037].map((x) => <g key={x}><text x={x - 6} y={524}>02</text><text x={x - 2} y={555}>01</text></g>)}
      <text x={720} y={318}>T-bau</text><text x={740} y={430}>T-bau</text><text x={798} y={300}>42</text><text x={788} y={324}>42</text><text x={732} y={497}>01</text>
    </g>
    <path d="M743 157h4v7h-4zM382 337h4v6h-4zM434 323h4v6h-4zM736 141h32v2h-32z" fill="#f03030" />
    <path d="M737 352h8v7h-8zM765 289h8v8h-8zM190 186h8v8h-8zM748 280h6v6h-6z" fill="#20d820" />
    <Transformer x={217} y={376} /><Transformer x={284} y={376} />
    <path d="M235 358v14M262 358v14M235 372h27M235 383h43M217 340v14M284 340v14M213 317h8v8h-8zM280 317h8v8h-8zM217 400v14M284 400v14" stroke="#bbb" strokeWidth={2} fill="none" />
    <Transformer x={914} y={580} /><Transformer x={976} y={580} /><Transformer x={1037} y={580} />
    <path d="M930 577h12v24M950 577v24h14M914 628v12M976 628v12M910 636h8v8h-8zM972 636h8v8h-8z" stroke="#aaa" strokeWidth={2} fill="none" />
    <path d="M416 334h12v10h-12zM422 350v-6M428 348h8" stroke={B} strokeWidth={3} fill="none" />
    <path d="M372 348h6v8" stroke="#f7a04c" strokeWidth={3} fill="none" />
    <path d="M305 454h20M305 468h20" stroke={B} strokeWidth={3} />
    <g fill="none" stroke="#999" strokeWidth={2}>
      <circle cx={124} cy={378} r={4} /><path d="M124 382v8M132 394h10" />
      <circle cx={350} cy={478} r={4} /><circle cx={350} cy={468} r={4} /><circle cx={384} cy={468} r={4} />
    </g>
    <g fill="none" stroke="#777" strokeWidth={3}>
      {[970, 996, 1024, 1050].map((x) => <path key={x} d={`M${x - 4} 694h8v8h-8zM${x - 4} 716h8v8h-8zM${x - 4} 738h8v8h-8zM${x} 702v14M${x} 724v14M${x - 8} 689h16`} strokeWidth={2} />)}
    </g>
    <g fontSize={9} fill="#222">
      <text x={375} y={283} fill="#3c3cf0" fontSize={9} fontWeight="bold">Windpark Ems</text>
      <text x={390} y={264} fill="#6c6cf8">Nordsee</text>
      <text x={344} y={509}>ARKHI Bau silburen</text>
      <text x={224} y={331}>TR. 12</text><text x={291} y={331}>TR. 11</text>
      <text x={108} y={364}>Eigenb.</text><text x={374} y={309}>Süd 1</text><text x={419} y={309}>Süd 2</text>
      <text x={174} y={407}>SS1</text><text x={174} y={434}>SS2</text>
      <text x={870} y={620}>TR. 11</text><text x={982} y={620}>TR. 12</text><text x={1028} y={638}>TR. 1</text>
      <text x={1006} y={501}>Bau 01</text><text x={1050} y={501}>Bau 02</text>
      <text x={1078} y={528}>SS1</text><text x={1078} y={553}>SS2</text>
      <text x={906} y={699}>Station</text><text x={906} y={723}>Trennstelle</text><text x={890} y={745}>Leistungsschalter</text>
      <text x={1108} y={728} textAnchor="end">Übersicht</text><text x={952} y={682}>Abgang</text><text x={1010} y={682}>Reserve</text>
    </g>
  </Drawing>
);

const Ribbon = styled.div`
  flex: none;
  display: flex;
  flex-direction: column;
  background: #f8d0b0;
`;

const QuickBar = styled.div`
  display: flex;
  align-items: center;
  height: 8px;
  padding-left: 2px;
`;

const RibbonLogo = styled.div`
  margin-left: 90px;
  padding: 0 1px;
  border: 1px solid #333;
  background: #fff;
  font: bold 5px/5px "Liberation Sans", sans-serif;
  color: #222;
  em { color: #d20a11; font-style: normal; }
`;

const RibbonGroup = styled.div<{ $w: number }>`
  flex: 0 0 ${(p) => p.$w}px;
  display: flex;
  flex-direction: column;
  justify-content: space-between;
  border-right: 1px solid #e6e6e6;
  small { background: #ededed; font-size: 3px; line-height: 4px; text-align: center; color: #666; }
`;

const RibbonBody = styled.div`
  display: flex;
  height: 17px;
  background: #fafafa;
  border-bottom: 1px solid #e2e2e2;
`;

const palette = ["#3f8fd0", "#e8b030", "#4aa050", "#8a6fc0", "#d85050", "#5a7a9a"];
const IconStrip = ({ n, seed = 0, pitch = 6 }: { n: number; seed?: number; pitch?: number }) => (
  <svg width={n * pitch} height={5} viewBox={`0 0 ${n * pitch} 5`} aria-hidden="true">
    {Array.from({ length: n }, (_, i) => {
      const c = palette[(i + seed) % 6];
      const x = i * pitch;
      return i % 3 === 0
        ? <path key={i} d={`M${x} 1h3v3h-3z`} fill={c} fillOpacity={0.8} />
        : i % 3 === 1
          ? <path key={i} d={`M${x} 4l3-3M${x} 2l2 2`} stroke={c} />
          : <circle key={i} cx={x + 2} cy={2.500} r={1.500} fill={c} fillOpacity={0.8} />;
    })}
  </svg>
);

const StatusBar = styled.footer`
  flex: none;
  display: flex;
  align-items: center;
  gap: 4px;
  height: 7px;
  padding: 0 5px 0 8px;
  border-top: 1px solid #9fd0ea;
  background: #f6f8f9;
  > :last-child { margin-left: auto; }
`;

const NetFrame = styled.div`
  flex: 1;
  border-top: 1px solid #8fc5e0;
  border-left: 1px solid #8fc5e0;
  overflow: hidden;
`;

const menuTabs = ["Project branch management", "System Analysis", "Regulation/Model Design", "Library", "Map", "Import/Export", "Report", "Help", "Debug"];

const NetworkWindow = () => (
  <Win $x={520} $y={145} $w={360} $h={248}>
    <Body>
      <Drawing width={6} height={248} viewBox="0 0 6 248" aria-hidden="true">
        <path d="M0 0H6V248H0Z" fill="#f2f5f7" />
        <path d="M0 11H3V19H0Z" fill="#2f9fd8" />
        <path d="M4.500 7V246" stroke="#a7d4ea" />
        <path d="M0 130H3V149H0M0 132l3 4-3 4 3 4-3 4" fill="none" stroke="#e79ac0" />
      </Drawing>
      <Column>
        <Ribbon>
          <QuickBar><IconStrip n={15} /><RibbonLogo>N<em>E</em>PLAN</RibbonLogo></QuickBar>
          <Tabs $h={6} $bg="transparent" $color="#8a6450">
            <Tab $blue>▤▾</Tab><Tab $active $pad={3}>Home</Tab>
            {menuTabs.map((t) => <Tab key={t} $pad={2}>{t}</Tab>)}
          </Tabs>
          <RibbonBody>
            <RibbonGroup $w={31}><span>▤ Diagram Properties</span><span>▤ Project Properties</span><small>Properties</small></RibbonGroup>
            <RibbonGroup $w={46}><IconStrip n={7} seed={4} /><IconStrip n={6} seed={3} /><small>Toolbox</small></RibbonGroup>
            <RibbonGroup $w={29}><span>⟋ Line/Link (AC) ▾</span><span>● AC Node ▾ ▦</span><small>Insert</small></RibbonGroup>
            <RibbonGroup $w={39}><Pick $w={37} aria-label="Analysis"><option>Load Flow</option></Pick><span>■ ▥ Parameters ▤</span><small>Analysis</small></RibbonGroup>
            <RibbonGroup $w={34}><span>▤ Summary ▾ ◕ Chart</span><span>Load of label result ▾</span><small>Results</small></RibbonGroup>
            <RibbonGroup $w={41}><Pick $w={39} aria-label="Operational state"><option>Default</option></Pick><span>▤ Edit Operational State ▾</span><small>Operational State</small></RibbonGroup>
            <RibbonGroup $w={22}><Push>Install</Push><small>Out of Browser</small></RibbonGroup>
          </RibbonBody>
        </Ribbon>
        <Body>
          <SideRail $w={4}><span>Data Source ◆</span><span>Diagram/Layers ◆</span><span>Elements ◆</span></SideRail>
          <Column>
            <Tabs $h={6}><Tab $pad={0}>Arneberg / 'Windpark Ems' ×</Tab><Tab $blue $pad={1}>Arneberg / 'Hohenlohe' ×</Tab></Tabs>
            <NetFrame><NetworkDiagram /></NetFrame>
          </Column>
        </Body>
        <StatusBar>
          <span>Logged in as: host</span><span>☑ FTS Module</span><span>5943086.955 / 5943043.874</span><span>Zoom 51.136.44</span><span>Visible Graphics: 75.0 / Total Items: 2223</span><span>Total Graphics: 2360</span>
          <IconStrip n={9} pitch={7} />
        </StatusBar>
      </Column>
    </Body>
  </Win>
);

export default function App() {
  return (
    <>
      <GlobalStyle />
      <Page>
        <Stage>
          <OvercurrentWindow />
          <MapWindow />
          <TurbineWindow />
          <StripWindow />
          <SimulationWindow />
          <LogoWindow />
          <ChartsWindow />
          <NetworkWindow />
        </Stage>
      </Page>
    </>
  );
}
